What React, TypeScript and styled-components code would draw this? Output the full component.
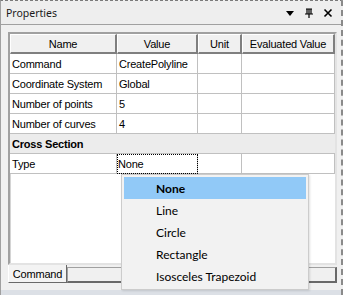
import React from "react";
import styled, { createGlobalStyle } from "styled-components";

const Global = createGlobalStyle`
  html, body { margin: 0; padding: 0; background: #f0f0f0; }
  #root { width: 343px; height: 295px; }
`;

const Window = styled.div`
  position: relative;
  box-sizing: border-box;
  width: 343px;
  height: 295px;
  display: flex;
  flex-direction: column;
  background: #f0f0f0;
  border-top: 1px dashed #7a7a7a;
  border-right: 2px dashed #8a8a8a;
  border-left: 1px solid #a0a0a0;
  overflow: hidden;
`;

const TitleBar = styled.div`
  height: 23px;
  flex: none;
  display: flex;
  align-items: center;
  padding: 0 6px 0 5px;
  background: #eeeeee;
  border-bottom: 1px solid #a0a0a0;
  font-family: "Noto Sans", "Open Sans", sans-serif;
  font-size: 10.5px;
  color: #1a1a1a;
`;

const Title = styled.span`
  flex: 1;
`;

const TitleButtons = styled.div`
  display: flex;
  align-items: center;
  gap: 9px;
  margin-right: 2px;
`;

const Body = styled.div`
  flex: 1;
  display: flex;
  flex-direction: column;
  padding: 7px 4px 0 7px;
  min-height: 0;
`;

const GridFrame = styled.div`
  height: 229px;
  flex: none;
  display: flex;
  flex-direction: column;
  background: #ffffff;
  border-top: 2px solid #a0a0a0;
  border-left: 2px solid #a0a0a0;
  border-right: 2px solid #e3e3e3;
  border-bottom: 2px solid #e3e3e3;
  box-shadow: inset 1px 1px 0 #d4d4d4;
  font-family: "Liberation Sans", Arial, sans-serif;
  font-size: 11px;
  letter-spacing: -0.2px;
  color: #000;
`;

const Row = styled.div<{ $section?: boolean }>`
  display: grid;
  grid-template-columns: 107px 81px 44px 1fr;
  height: 20px;
  background: ${(p) => (p.$section ? "#ececec" : "#ffffff")};
`;

const HeaderCell = styled.div`
  box-sizing: border-box;
  display: flex;
  align-items: center;
  justify-content: center;
  background: #f0f0f0;
  border-top: 1px solid #ffffff;
  border-left: 1px solid #ffffff;
  border-right: 2px solid #7f7f7f;
  border-bottom: 2px solid #7f7f7f;
  padding-top: 1px;
`;

const Cell = styled.div<{ $focus?: boolean }>`
  box-sizing: border-box;
  display: flex;
  align-items: center;
  padding-left: ${(p) => (p.$focus ? "1px" : "2px")};
  border-right: 1px solid #c0c0c0;
  border-bottom: 1px solid #c0c0c0;
  white-space: nowrap;
  overflow: hidden;
  outline: ${(p) => (p.$focus ? "1px dotted #000" : "none")};
  outline-offset: -1px;
`;

const SectionCell = styled.div`
  grid-column: 1 / -1;
  display: flex;
  align-items: center;
  padding-left: 2px;
  font-weight: bold;
  border-bottom: 1px solid #c0c0c0;
`;

const TabRow = styled.div`
  height: 18px;
  flex: none;
  display: flex;
  align-items: flex-start;
`;

const Tab = styled.div`
  box-sizing: border-box;
  width: 59px;
  height: 18px;
  display: flex;
  align-items: center;
  justify-content: center;
  background: #f3f3f3;
  border-left: 1px solid #ffffff;
  border-right: 1px solid #696969;
  border-bottom: 1px solid #696969;
  font-family: "Liberation Sans", Arial, sans-serif;
  font-size: 11px;
  letter-spacing: -0.2px;
  color: #000;
  padding-top: 1px;
`;

const TabStrip = styled.div`
  box-sizing: border-box;
  flex: 1;
  height: 16px;
  margin-top: 2px;
  background: #f0f0f0;
  border-top: 1px solid #a0a0a0;
  border-left: 1px solid #a0a0a0;
  border-right: 2px solid #696969;
  border-bottom: 2px solid #696969;
`;

const Footer = styled.div`
  height: 5px;
  flex: none;
  background: #dce0e6;
`;

const Menu = styled.div`
  position: absolute;
  left: 120px;
  top: 173px;
  box-sizing: border-box;
  width: 188px;
  height: 116px;
  padding: 2px;
  background: #f2f2f2;
  border: 1px solid #cccccc;
  box-shadow: 1px 1px 2px rgba(0, 0, 0, 0.12);
  font-family: Lato, "Noto Sans", sans-serif;
  font-size: 12px;
  color: #000;
`;

const MenuItem = styled.div<{ $active?: boolean }>`
  height: 22px;
  display: flex;
  align-items: center;
  padding-left: 32px;
  background: ${(p) => (p.$active ? "#91c9f7" : "transparent")};
  font-weight: ${(p) => (p.$active ? "bold" : "normal")};
`;

const rows = [
  ["Command", "CreatePolyline"],
  ["Coordinate System", "Global"],
  ["Number of points", "5"],
  ["Number of curves", "4"],
];

const Icon = ({ children }: { children: React.ReactNode }) => (
  <svg width="10" height="10" viewBox="0 0 10 10">
    {children}
  </svg>
);

export default function App() {
  return (
    <>
      <Global />
      <Window>
        <TitleBar>
          <Title>Properties</Title>
          <TitleButtons>
            <Icon>
              <path d="M1 3 L9 3 L5 8 Z" fill="#000" />
            </Icon>
            <Icon>
              <path d="M2 1 H8 M3 1 V6 M5 1 V6 M7 1 V6 M1 6 H9 M5 6 V10" stroke="#000" strokeWidth="1.2" fill="none" />
            </Icon>
            <Icon>
              <path d="M1.5 1.5 L8.5 8.5 M8.5 1.5 L1.5 8.5" stroke="#000" strokeWidth="1.6" />
            </Icon>
          </TitleButtons>
        </TitleBar>
        <Body>
          <GridFrame>
            <Row>
              <HeaderCell>Name</HeaderCell>
              <HeaderCell>Value</HeaderCell>
              <HeaderCell>Unit</HeaderCell>
              <HeaderCell>Evaluated Value</HeaderCell>
            </Row>
            {rows.map(([n, v]) => (
              <Row key={n}>
                <Cell>{n}</Cell>
                <Cell>{v}</Cell>
                <Cell />
                <Cell />
              </Row>
            ))}
            <Row $section>
              <SectionCell>Cross Section</SectionCell>
            </Row>
            <Row>
              <Cell>Type</Cell>
              <Cell $focus>None</Cell>
              <Cell />
              <Cell />
            </Row>
          </GridFrame>
          <TabRow>
            <Tab>Command</Tab>
            <TabStrip />
          </TabRow>
        </Body>
        <Footer />
        <Menu>
          <MenuItem $active>None</MenuItem>
          <MenuItem>Line</MenuItem>
          <MenuItem>Circle</MenuItem>
          <MenuItem>Rectangle</MenuItem>
          <MenuItem>Isosceles Trapezoid</MenuItem>
        </Menu>
      </Window>
    </>
  );
}
